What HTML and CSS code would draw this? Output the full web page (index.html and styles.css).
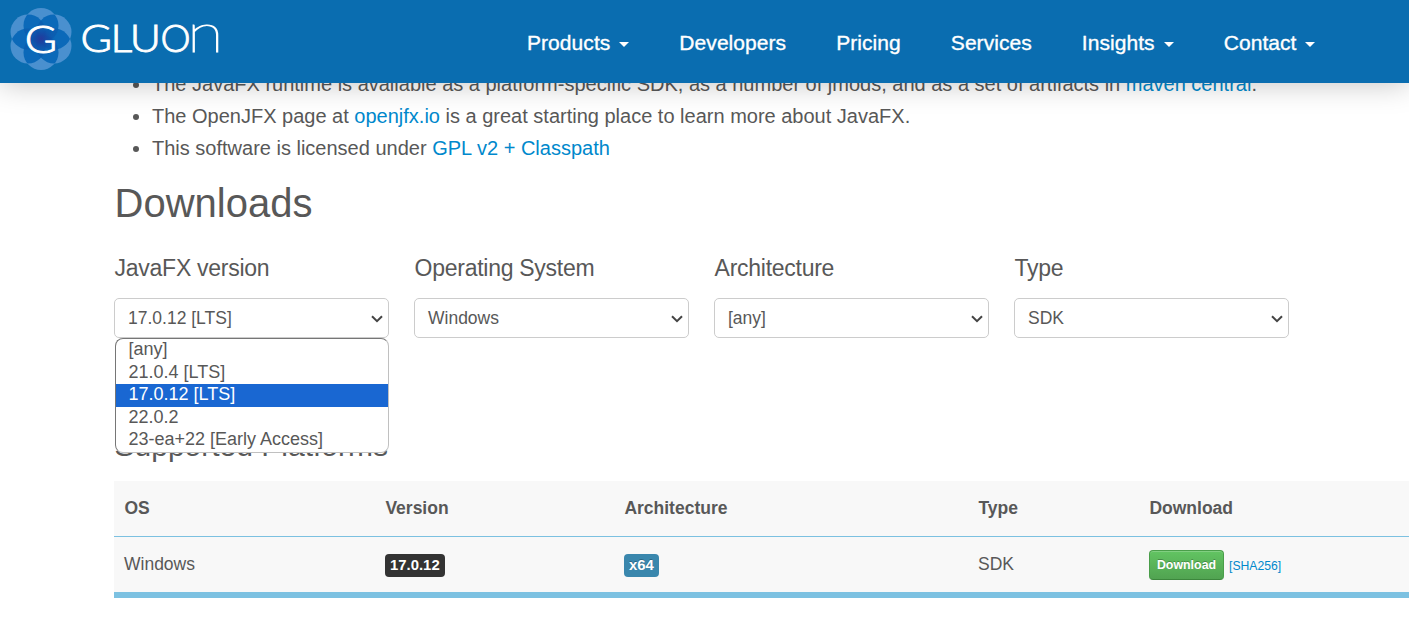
FILE: index.html
```html
<!DOCTYPE html>
<html lang="en">
<head>
<meta charset="utf-8">
<title>JavaFX - Gluon</title>
<link rel="stylesheet" href="styles.css">
</head>
<body>
<header class="navbar">
  <svg class="logo" width="240" height="83" viewBox="0 0 240 83" role="img" aria-label="Gluon">
    <defs>
      <radialGradient id="core"><stop offset="0" stop-color="#263a9c"/><stop offset=".4" stop-color="#1747a5" stop-opacity=".75"/><stop offset="1" stop-color="#0b5bb0" stop-opacity="0"/></radialGradient>
      <clipPath id="p0"><circle cx="41" cy="25.5" r="17.5"/></clipPath>
      <clipPath id="p1"><circle cx="54" cy="32" r="17.5"/></clipPath>
      <clipPath id="p2"><circle cx="54" cy="46" r="17.5"/></clipPath>
      <clipPath id="p3"><circle cx="41" cy="52.5" r="17.5"/></clipPath>
      <clipPath id="p4"><circle cx="28" cy="46" r="17.5"/></clipPath>
      <clipPath id="p5"><circle cx="28" cy="32" r="17.5"/></clipPath>
    </defs>
    <g fill="#4a90cf">
      <circle cx="41" cy="25.5" r="17.5"/><circle cx="54" cy="32" r="17.5"/><circle cx="54" cy="46" r="17.5"/>
      <circle cx="41" cy="52.5" r="17.5"/><circle cx="28" cy="46" r="17.5"/><circle cx="28" cy="32" r="17.5"/>
    </g>
    <g fill="#0b69b9">
      <circle cx="54" cy="32" r="17.5" clip-path="url(#p0)"/><circle cx="54" cy="46" r="17.5" clip-path="url(#p1)"/>
      <circle cx="41" cy="52.5" r="17.5" clip-path="url(#p2)"/><circle cx="28" cy="46" r="17.5" clip-path="url(#p3)"/>
      <circle cx="28" cy="32" r="17.5" clip-path="url(#p4)"/><circle cx="41" cy="25.5" r="17.5" clip-path="url(#p5)"/>
    </g>
    <g fill="#0c4da2" fill-opacity=".35">
      <circle cx="54" cy="46" r="17.5" clip-path="url(#p0)"/><circle cx="41" cy="52.5" r="17.5" clip-path="url(#p1)"/>
      <circle cx="28" cy="46" r="17.5" clip-path="url(#p2)"/><circle cx="28" cy="32" r="17.5" clip-path="url(#p3)"/>
      <circle cx="41" cy="25.5" r="17.5" clip-path="url(#p4)"/><circle cx="54" cy="32" r="17.5" clip-path="url(#p5)"/>
    </g>
    <circle cx="41" cy="39" r="15" fill="url(#core)"/>
    <text class="mark" transform="translate(24.8 52.5) scale(1.16 1)">G</text>
    <text class="word" transform="translate(80.5 52.3) scale(1.13 1)" x="0 26.5 43.5">GLU</text>
    <text class="word" transform="translate(160.5 52.3)">O</text>
    <text class="word word-n" transform="translate(187.3 52.3) scale(1.25 1)">n</text>
  </svg>
  <nav class="menu">
    <a class="item" href="#">Products<i class="caret"></i></a>
    <a class="item" href="#">Developers</a>
    <a class="item" href="#">Pricing</a>
    <a class="item" href="#">Services</a>
    <a class="item" href="#">Insights<i class="caret"></i></a>
    <a class="item" href="#">Contact<i class="caret"></i></a>
  </nav>
</header>
<main class="content">
  <ul class="notes">
    <li>The JavaFX runtime is available as a platform-specific SDK, as a number of jmods, and as a set of artifacts in <a href="#">maven central</a>.</li>
    <li>The OpenJFX page at <a href="#">openjfx.io</a> is a great starting place to learn more about JavaFX.</li>
    <li>This software is licensed under <a href="#">GPL v2 + Classpath</a></li>
  </ul>
  <h1 class="title">Downloads</h1>
  <section class="filters">
    <div class="filter">
      <h2 class="label">JavaFX version</h2>
      <div class="select">17.0.12 [LTS]<svg class="chev" width="12" height="8" viewBox="0 0 12 8"><path d="M1 1.2 6 6.2 11 1.2"/></svg></div>
      <ul class="options">
        <li>[any]</li>
        <li>21.0.4 [LTS]</li>
        <li class="active">17.0.12 [LTS]</li>
        <li>22.0.2</li>
        <li>23-ea+22 [Early Access]</li>
      </ul>
    </div>
    <div class="filter">
      <h2 class="label">Operating System</h2>
      <div class="select">Windows<svg class="chev" width="12" height="8" viewBox="0 0 12 8"><path d="M1 1.2 6 6.2 11 1.2"/></svg></div>
    </div>
    <div class="filter">
      <h2 class="label">Architecture</h2>
      <div class="select">[any]<svg class="chev" width="12" height="8" viewBox="0 0 12 8"><path d="M1 1.2 6 6.2 11 1.2"/></svg></div>
    </div>
    <div class="filter">
      <h2 class="label">Type</h2>
      <div class="select">SDK<svg class="chev" width="12" height="8" viewBox="0 0 12 8"><path d="M1 1.2 6 6.2 11 1.2"/></svg></div>
    </div>
  </section>
  <h2 class="subtitle">Supported Platforms</h2>
  <section class="table">
    <div class="row head">
      <span>OS</span><span>Version</span><span>Architecture</span><span>Type</span><span>Download</span>
    </div>
    <div class="row">
      <span>Windows</span>
      <span><b class="badge dark">17.0.12</b></span>
      <span><b class="badge info">x64</b></span>
      <span>SDK</span>
      <span class="get"><a class="btn" href="#">Download</a><a class="sha" href="#">[SHA256]</a></span>
    </div>
  </section>
</main>
</body>
</html>
```
FILE: styles.css
```css
* { box-sizing: border-box; }
body {
  margin: 0;
  height: 640px;
  overflow: hidden;
  background: #fff;
  color: #585858;
  font-family: "Liberation Sans", Arial, sans-serif;
}
a { color: #0088cc; text-decoration: none; }

.navbar {
  position: relative;
  z-index: 2;
  display: flex;
  height: 83px;
  background: #0a6db0;
  box-shadow: 0 0 30px rgba(0, 0, 0, .25);
}
.logo { flex: none; }
.mark, .word { font-family: Lato, sans-serif; font-weight: 300; fill: #fff; font-size: 38px; stroke: #fff; stroke-width: .9px; }
.word-n { font-size: 53px; font-weight: 100; stroke-width: 1.1px; }
.menu {
  display: flex;
  gap: 50px;
  padding: 2px 0 0 287px;
  line-height: 84px;
  font-size: 21px;
  letter-spacing: .06px;
}
.item {
  display: flex;
  align-items: center;
  color: #fff;
  white-space: nowrap;
  -webkit-text-stroke: .35px #fff;
}
.caret {
  margin: 3px 0 0 9px;
  border: 5px solid transparent;
  border-top-color: #fff;
  border-bottom: 0;
}

.content { margin-top: -15px; padding-left: 114px; }
.notes { margin: 0; padding: 0 0 0 38px; font-size: 20px; line-height: 32px; }
.notes li { white-space: nowrap; }
.title { margin: 19px 0 0; font-size: 40px; font-weight: 400; line-height: 40px; text-indent: .5px; }
.filters { display: flex; gap: 25px; padding-top: 30px; }
.filter { position: relative; width: 275px; }
.label { margin: 0; height: 45px; font-size: 23px; font-weight: 400; line-height: 30px; letter-spacing: -.27px; text-indent: .6px; }
.select {
  display: flex;
  align-items: center;
  justify-content: space-between;
  height: 40px;
  padding: 0 5px 0 13px;
  border: 1px solid #ccc;
  border-radius: 5px;
  font-size: 17.5px;
}
.chev { margin-top: 2px; fill: none; stroke: #444; stroke-width: 2; }
.options {
  position: absolute;
  z-index: 1;
  top: 85px;
  left: 1px;
  width: 274px;
  height: 115px;
  margin: 0;
  padding: 0;
  border: 1px solid #c0c0c0;
  border-top-color: #767676;
  border-left-color: #767676;
  border-radius: 8px;
  background: #fff;
  list-style: none;
  font-size: 18px;
  line-height: 21.5px;
}
.options li { height: 22.5px; padding-left: 12.5px; }
.options .active { background: #1967d2; color: #fff; }
.subtitle { margin: 91px 0 0; height: 52px; font-size: 30px; font-weight: 400; line-height: 34px; text-indent: .5px; }

.table { background: #f8f8f8; border-bottom: 6px solid #7cc1e1; font-size: 17.5px; }
.row {
  display: grid;
  grid-template-columns: 261px 239px 354px 171px 1fr;
  align-items: center;
  height: 55px;
  padding-left: 10px;
}
.row.head { height: 56px; border-bottom: 1px solid #7cc1e1; font-weight: 700; text-indent: .4px; }
.badge {
  display: block;
  width: max-content;
  margin-top: 2px;
  padding: 0 5px;
  border-radius: 4px;
  color: #fff;
  font-size: 14.9px;
  line-height: 23px;
}
.dark { background: #333; }
.info { background: #3a87ad; text-shadow: 0 -1px 0 rgba(0, 0, 0, .25); }
.get { display: flex; align-items: center; gap: 5px; }
.btn {
  width: 75px;
  height: 30px;
  margin-top: 1px;
  border: 1px solid #4a9e4a;
  border-bottom-color: #3c873c;
  border-radius: 4px;
  background: linear-gradient(#62c462, #51a351);
  box-shadow: inset 0 1px 0 rgba(255, 255, 255, .2);
  color: #fff;
  font-size: 12.4px;
  font-weight: 700;
  line-height: 28px;
  text-align: center;
  text-shadow: 0 -1px 0 rgba(0, 0, 0, .25);
}
.sha { margin-top: 2px; font-size: 12.2px; }
```
